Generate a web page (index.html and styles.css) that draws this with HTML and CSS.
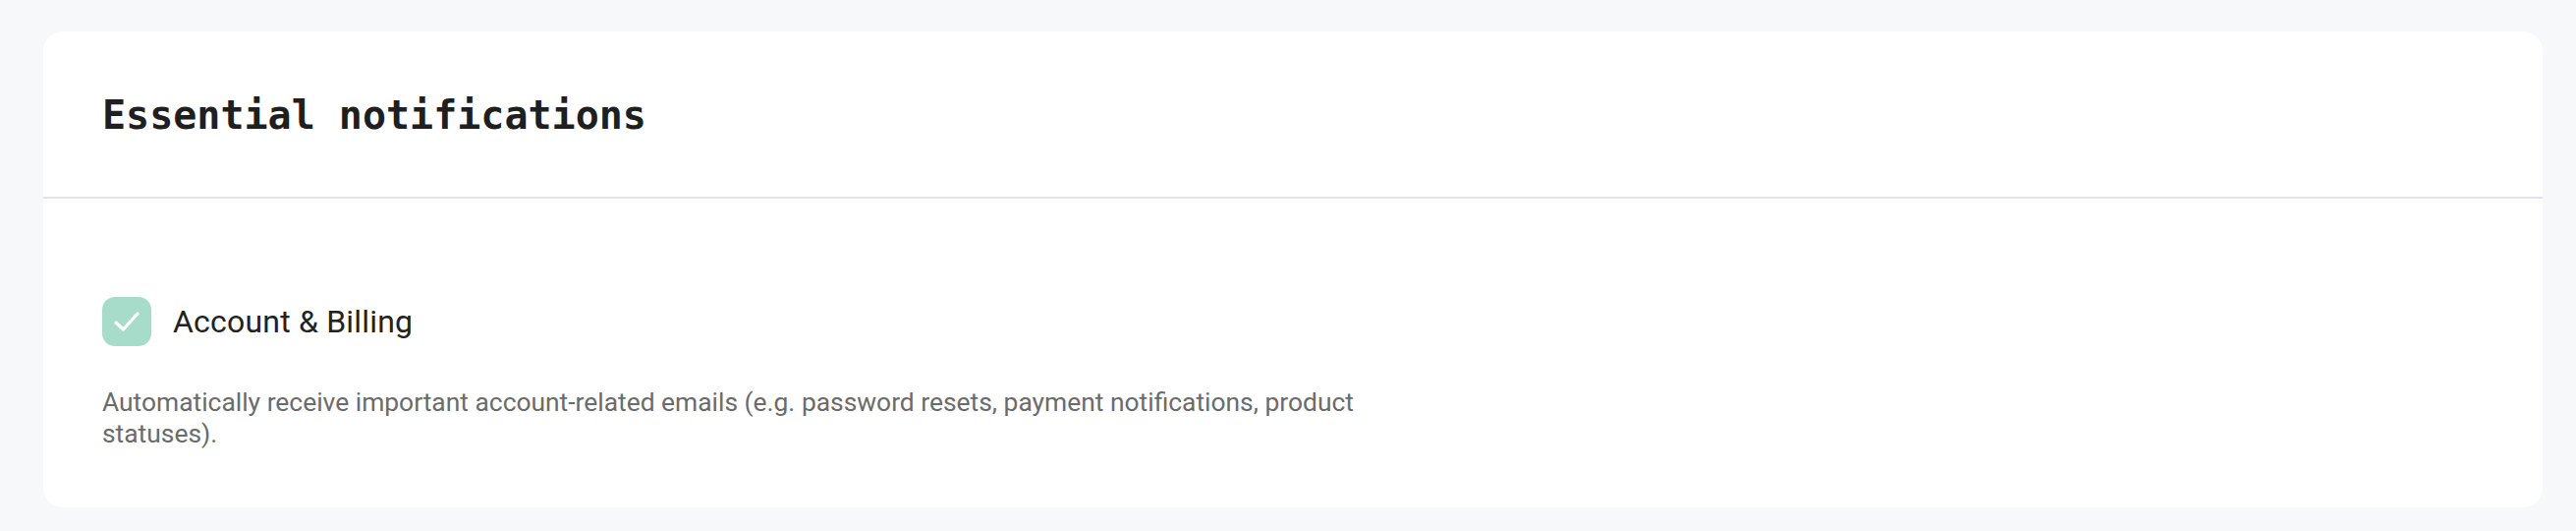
FILE: index.html
```html
<!DOCTYPE html>
<html lang="en">
<head>
<meta charset="utf-8">
<title>Notification settings</title>
<link rel="stylesheet" href="styles.css">
</head>
<body>
  <section class="card">
    <header class="card-header">
      <h2 class="card-title">Essential notifications</h2>
    </header>
    <div class="card-body">
      <label class="option">
        <span class="checkbox" aria-checked="true" role="checkbox">
          <svg viewBox="0 0 50 50" width="50" height="50" aria-hidden="true">
            <path d="M14 26 L21.5 33 L36 17" fill="none" stroke="#ffffff" stroke-width="3.2" stroke-linecap="round" stroke-linejoin="round"/>
          </svg>
        </span>
        <span class="option-label">Account &amp; Billing</span>
      </label>
      <p class="option-help">Automatically receive important account-related emails (e.g. password resets, payment notifications, product statuses).</p>
    </div>
  </section>
</body>
</html>
```

FILE: styles.css
```css
* {
  box-sizing: border-box;
}

html, body {
  height: 100%;
}

body {
  margin: 0;
  padding: 32px 34px 24px 44px;
  background: #f7f8fa;
  font-family: Roboto, "Liberation Sans", sans-serif;
  display: flex;
  flex-direction: column;
}

.card {
  flex: 1;
  background: #ffffff;
  border-radius: 20px;
  display: flex;
  flex-direction: column;
}

.card-header {
  padding: 61px 60px 59px;
  border-bottom: 2px solid #e3e3e9;
}

.card-title {
  margin: 0;
  font-family: "DejaVu Sans Mono", "Liberation Mono", monospace;
  font-weight: 700;
  font-size: 40px;
  line-height: 48px;
  color: #1f1f1f;
}

.card-body {
  padding: 100px 60px 0;
}

.option {
  display: flex;
  align-items: center;
  gap: 22px;
}

.checkbox {
  width: 50px;
  height: 50px;
  border-radius: 13px;
  background: #a8dcca;
  display: flex;
  align-items: center;
  justify-content: center;
  flex: none;
}

.checkbox svg {
  display: block;
}

.option-label {
  font-size: 32px;
  letter-spacing: 0.2px;
  line-height: 50px;
  color: #222222;
}

.option-help {
  margin: 41px 0 0;
  max-width: 1320px;
  font-size: 26.4px;
  line-height: 32px;
  color: #6b6b6b;
}
```
